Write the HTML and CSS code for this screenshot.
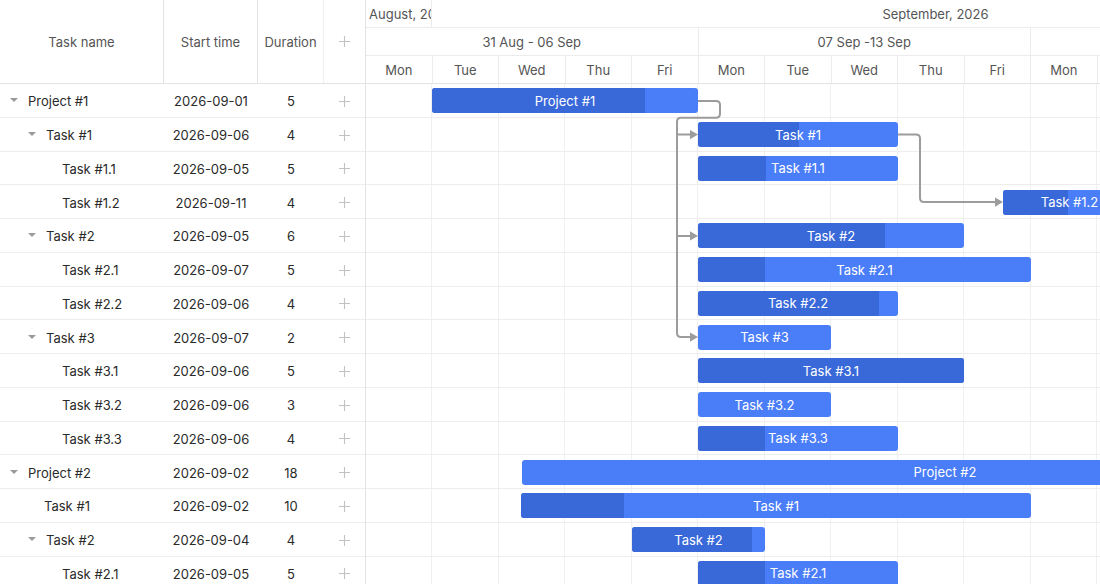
FILE: index.html
```html
<!DOCTYPE html>
<html lang="en">
<head>
  <meta charset="UTF-8">
  <meta name="viewport" content="width=device-width, initial-scale=1.0">
  <title>Gantt</title>
  <link rel="stylesheet" href="styles.css">
</head>
<body>

<div class="gantt">
  <!-- left grid -->
  <div class="grid">
    <div class="grid-head">
      <div class="hcell">Task name</div>
      <div class="hcell">Start time</div>
      <div class="hcell">Duration</div>
      <div class="hcell add"><svg class="plus" viewBox="0 0 12 12"><path d="M0 6H12M6 0V12"/></svg></div>
    </div>
    <div class="grid-body">
      <div class="grow"><div class="name l0"><span class="toggle"></span>Project #1</div><div class="cell">2026-09-01</div><div class="cell">5</div><div class="cell"><svg class="plus" viewBox="0 0 12 12"><path d="M0 6H12M6 0V12"/></svg></div></div>
      <div class="grow"><div class="name l1"><span class="toggle"></span>Task #1</div><div class="cell">2026-09-06</div><div class="cell">4</div><div class="cell"><svg class="plus" viewBox="0 0 12 12"><path d="M0 6H12M6 0V12"/></svg></div></div>
      <div class="grow"><div class="name l2"><span class="slot"></span>Task #1.1</div><div class="cell">2026-09-05</div><div class="cell">5</div><div class="cell"><svg class="plus" viewBox="0 0 12 12"><path d="M0 6H12M6 0V12"/></svg></div></div>
      <div class="grow"><div class="name l2"><span class="slot"></span>Task #1.2</div><div class="cell">2026-09-11</div><div class="cell">4</div><div class="cell"><svg class="plus" viewBox="0 0 12 12"><path d="M0 6H12M6 0V12"/></svg></div></div>
      <div class="grow"><div class="name l1"><span class="toggle"></span>Task #2</div><div class="cell">2026-09-05</div><div class="cell">6</div><div class="cell"><svg class="plus" viewBox="0 0 12 12"><path d="M0 6H12M6 0V12"/></svg></div></div>
      <div class="grow"><div class="name l2"><span class="slot"></span>Task #2.1</div><div class="cell">2026-09-07</div><div class="cell">5</div><div class="cell"><svg class="plus" viewBox="0 0 12 12"><path d="M0 6H12M6 0V12"/></svg></div></div>
      <div class="grow"><div class="name l2"><span class="slot"></span>Task #2.2</div><div class="cell">2026-09-06</div><div class="cell">4</div><div class="cell"><svg class="plus" viewBox="0 0 12 12"><path d="M0 6H12M6 0V12"/></svg></div></div>
      <div class="grow"><div class="name l1"><span class="toggle"></span>Task #3</div><div class="cell">2026-09-07</div><div class="cell">2</div><div class="cell"><svg class="plus" viewBox="0 0 12 12"><path d="M0 6H12M6 0V12"/></svg></div></div>
      <div class="grow"><div class="name l2"><span class="slot"></span>Task #3.1</div><div class="cell">2026-09-06</div><div class="cell">5</div><div class="cell"><svg class="plus" viewBox="0 0 12 12"><path d="M0 6H12M6 0V12"/></svg></div></div>
      <div class="grow"><div class="name l2"><span class="slot"></span>Task #3.2</div><div class="cell">2026-09-06</div><div class="cell">3</div><div class="cell"><svg class="plus" viewBox="0 0 12 12"><path d="M0 6H12M6 0V12"/></svg></div></div>
      <div class="grow"><div class="name l2"><span class="slot"></span>Task #3.3</div><div class="cell">2026-09-06</div><div class="cell">4</div><div class="cell"><svg class="plus" viewBox="0 0 12 12"><path d="M0 6H12M6 0V12"/></svg></div></div>
      <div class="grow"><div class="name l0"><span class="toggle"></span>Project #2</div><div class="cell">2026-09-02</div><div class="cell">18</div><div class="cell"><svg class="plus" viewBox="0 0 12 12"><path d="M0 6H12M6 0V12"/></svg></div></div>
      <div class="grow"><div class="name l1 leaf"><span class="slot"></span>Task #1</div><div class="cell">2026-09-02</div><div class="cell">10</div><div class="cell"><svg class="plus" viewBox="0 0 12 12"><path d="M0 6H12M6 0V12"/></svg></div></div>
      <div class="grow"><div class="name l1"><span class="toggle"></span>Task #2</div><div class="cell">2026-09-04</div><div class="cell">4</div><div class="cell"><svg class="plus" viewBox="0 0 12 12"><path d="M0 6H12M6 0V12"/></svg></div></div>
      <div class="grow"><div class="name l2"><span class="slot"></span>Task #2.1</div><div class="cell">2026-09-05</div><div class="cell">5</div><div class="cell"><svg class="plus" viewBox="0 0 12 12"><path d="M0 6H12M6 0V12"/></svg></div></div>
    </div>
  </div>

  <!-- timeline -->
  <div class="chart">
    <div class="scale">
      <div class="srow">
        <div class="scell month-aug">August, 2026</div>
        <div class="scell month-sep">September, 2026</div>
      </div>
      <div class="srow">
        <div class="scell week">31 Aug - 06 Sep</div>
        <div class="scell week">07 Sep -13 Sep</div>
        <div class="scell week"></div>
      </div>
      <div class="srow">
        <div class="scell day">Mon</div><div class="scell day">Tue</div><div class="scell day">Wed</div><div class="scell day">Thu</div><div class="scell day">Fri</div>
        <div class="scell day">Mon</div><div class="scell day">Tue</div><div class="scell day">Wed</div><div class="scell day">Thu</div><div class="scell day">Fri</div>
        <div class="scell day">Mon</div><div class="scell day"></div>
      </div>
    </div>

    <div class="chart-body">
      <div class="crow"><div class="bar" style="left:66px;width:266px"><div class="progress" style="width:213px"></div><span class="label">Project #1</span></div></div>
      <div class="crow"><div class="bar" style="left:332px;width:200px"><div class="progress" style="width:101px"></div><span class="label">Task #1</span></div></div>
      <div class="crow"><div class="bar" style="left:332px;width:200px"><div class="progress" style="width:68px"></div><span class="label">Task #1.1</span></div></div>
      <div class="crow"><div class="bar" style="left:637px;width:133px"><div class="progress" style="width:65px"></div><span class="label">Task #1.2</span></div></div>
      <div class="crow"><div class="bar" style="left:332px;width:266px"><div class="progress" style="width:187px"></div><span class="label">Task #2</span></div></div>
      <div class="crow"><div class="bar" style="left:332px;width:333px"><div class="progress" style="width:67px"></div><span class="label">Task #2.1</span></div></div>
      <div class="crow"><div class="bar" style="left:332px;width:200px"><div class="progress" style="width:181px"></div><span class="label">Task #2.2</span></div></div>
      <div class="crow"><div class="bar" style="left:332px;width:133px"><span class="label">Task #3</span></div></div>
      <div class="crow"><div class="bar" style="left:332px;width:266px"><div class="progress" style="width:266px"></div><span class="label">Task #3.1</span></div></div>
      <div class="crow"><div class="bar" style="left:332px;width:133px"><span class="label">Task #3.2</span></div></div>
      <div class="crow"><div class="bar" style="left:332px;width:200px"><div class="progress" style="width:67px"></div><span class="label">Task #3.3</span></div></div>
      <div class="crow"><div class="bar" style="left:156px;width:846px"><span class="label">Project #2</span></div></div>
      <div class="crow"><div class="bar" style="left:155px;width:510px"><div class="progress" style="width:103px"></div><span class="label">Task #1</span></div></div>
      <div class="crow"><div class="bar" style="left:266px;width:133px"><div class="progress" style="width:120px"></div><span class="label">Task #2</span></div></div>
      <div class="crow"><div class="bar" style="left:332px;width:200px"><div class="progress" style="width:67px"></div><span class="label">Task #2.1</span></div></div>

      <svg class="links" width="734" height="510">
        <path d="M332 16.9H350Q354 16.9 354 20.9V29.7Q354 33.7 350 33.7H315Q311 33.7 311 37.7V249.1Q311 253.1 315 253.1H325"/>
        <path d="M311 50.6H325M311 151.9H325"/>
        <path d="M532 50.6H550Q554 50.6 554 54.6V114.1Q554 118.1 558 118.1H630"/>
        <polygon points="324,46 332,50.6 324,55.2"/>
        <polygon points="324,147.3 332,151.9 324,156.5"/>
        <polygon points="324,248.5 332,253.1 324,257.7"/>
        <polygon points="629,113.5 637,118.1 629,122.7"/>
      </svg>
    </div>
  </div>
</div>

</body>
</html>
```

FILE: styles.css
```css
html, body {
  margin: 0;
  height: 100%;
  overflow: hidden;
  background: #fff;
}
body {
  font-family: Inter, "Noto Sans", Arial, sans-serif;
  font-size: 13px;
  color: #2a2a2a;
}
.gantt {
  display: flex;
  width: 1100px;
  height: 584px;
  overflow: hidden;
}

/* left grid */
.grid {
  width: 365px;
  flex-shrink: 0;
  border-right: 1px solid #e3e3e3;
}
.grid-head,
.grow {
  display: grid;
  grid-template-columns: 164px 94px 66px 41px;
}
.grid-head {
  height: 84px;
  border-bottom: 1px solid #e3e3e3;
  box-sizing: border-box;
  color: #555;
}
.hcell {
  display: flex;
  align-items: center;
  justify-content: center;
  border-right: 1px solid #e3e3e3;
}
.hcell:nth-child(3) {
  border-right-color: #f1f1f1;
}
.hcell.add {
  border-right: none;
}
.grow {
  height: 33.75px;
  box-sizing: border-box;
  padding-top: 2px;
  border-bottom: 1px solid #ededed;
}
.cell {
  display: flex;
  align-items: center;
  justify-content: center;
}
.name {
  display: flex;
  align-items: center;
  padding-left: 6px;
  white-space: nowrap;
}
.name.l1 { padding-left: 24px; }
.name.l2 { padding-left: 40px; }
.name.leaf { padding-left: 22px; }
.toggle,
.slot {
  width: 22px;
  height: 10px;
  flex-shrink: 0;
  position: relative;
}
.toggle::before {
  content: "";
  position: absolute;
  left: 4px;
  top: 2px;
  border-left: 4px solid transparent;
  border-right: 4px solid transparent;
  border-top: 4px solid #9a9a9a;
}
.plus {
  width: 11px;
  height: 11px;
  stroke: #c2c2c2;
  stroke-width: 1.2;
  fill: none;
}

/* timeline */
.chart {
  flex: 1;
  overflow: hidden;
  position: relative;
}
.scale {
  height: 84px;
  border-bottom: 1px solid #e3e3e3;
  box-sizing: border-box;
  color: #555;
}
.srow {
  display: flex;
  height: 28px;
  box-sizing: border-box;
  border-bottom: 1px solid #ececec;
}
.srow:first-child { height: 27.5px; }
.srow:last-child {
  border-bottom: none;
  height: 27.5px;
}
.scell {
  flex-shrink: 0;
  display: flex;
  align-items: center;
  justify-content: center;
  padding-top: 2px;
  border-right: 1px solid #ececec;
  box-sizing: border-box;
  white-space: nowrap;
  overflow: hidden;
}
.month-aug {
  width: 66px;
  justify-content: flex-start;
  padding-left: 3px;
}
.month-sep { width: 1008px; }
.week { width: 332.5px; }
.day { width: 66.5px; }

.chart-body {
  position: relative;
  background: repeating-linear-gradient(to right, transparent 0 65.5px, #f0f0f0 65.5px 66.5px);
}
.crow {
  position: relative;
  height: 33.75px;
  box-sizing: border-box;
  border-bottom: 1px solid #ededed;
}
.bar {
  position: absolute;
  top: 4.4px;
  height: 25px;
  border-radius: 3px;
  background: #4a7df8;
  overflow: hidden;
  display: flex;
  align-items: center;
  justify-content: center;
}
.progress {
  position: absolute;
  left: 0;
  top: 0;
  bottom: 0;
  background: #3969d9;
}
.label {
  position: relative;
  color: #fff;
  white-space: nowrap;
}
.links {
  position: absolute;
  left: 0;
  top: 0;
  pointer-events: none;
}
.links path {
  fill: none;
  stroke: #9c9c9c;
  stroke-width: 2;
}
.links polygon {
  fill: #9c9c9c;
}
```
